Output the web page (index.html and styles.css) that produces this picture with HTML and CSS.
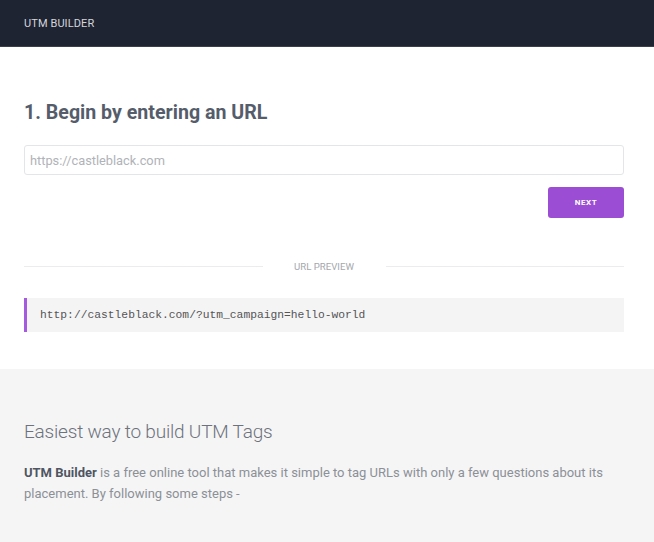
FILE: index.html
```html
<!DOCTYPE html>
<html>
<head>
<meta charset="utf-8">
<link rel="stylesheet" href="styles.css">
</head>
<body>
<header class="topbar"><span class="brand">UTM BUILDER</span></header>
<main class="builder">
  <h1 class="step-title">1. Begin by entering an URL</h1>
  <input class="url-input" type="text" placeholder="https://castleblack.com">
  <div class="actions"><button class="btn-next">NEXT</button></div>
  <div class="divider"><span class="divider-line"></span><span class="divider-label">URL PREVIEW</span><span class="divider-line"></span></div>
  <div class="preview">http://castleblack.com/?utm_campaign=hello-world</div>
</main>
<section class="info">
  <h2 class="info-title">Easiest way to build UTM Tags</h2>
  <p class="info-text"><strong>UTM Builder</strong> is a free online tool that makes it simple to tag URLs with only a few questions about its placement. By following some steps -</p>
</section>
</body>
</html>
```
FILE: styles.css
```css
* { box-sizing: border-box; }
html, body { margin: 0; padding: 0; }
body { font-family: Roboto, "Liberation Sans", sans-serif; background: #f5f5f6; width: 654px; height: 542px; overflow: hidden; }
.topbar { height: 47px; background: #1f2433; display: flex; align-items: center; padding: 0 24px; border-bottom: 1px solid #3a3f4d; }
.brand { color: #d4d6db; font-size: 11px; letter-spacing: 0.1px; }
.builder { background: #fff; padding: 54px 30px 37px 24px; }
.step-title { margin: 0; font-size: 19.6px; font-weight: 700; color: #555d6b; line-height: 23px; }
.url-input { display: block; width: 600px; height: 30px; margin-top: 21px; border: 1px solid #e4e5e8; border-radius: 3px; padding: 0 5px; font-family: Roboto, sans-serif; font-size: 12.8px; color: #444; outline: none; }
.url-input::placeholder { color: #b0b3b8; }
.actions { display: flex; justify-content: flex-end; width: 600px; margin-top: 12px; }
.btn-next { width: 76px; height: 31px; border: none; border-radius: 3px; background: #9b4dd3; color: #fff; font-family: Roboto, sans-serif; font-weight: 700; font-size: 8px; letter-spacing: 0.6px; }
.divider { display: flex; align-items: center; width: 600px; margin-top: 40px; height: 16px; }
.divider-line { flex: 1; height: 1px; background: #ececee; }
.divider-label { width: 123px; text-align: center; font-size: 9.6px; color: #a4a7ad; }
.preview { width: 600px; margin-top: 24px; height: 34px; background: #f4f4f5; border-left: 3px solid #a45be0; display: flex; align-items: center; padding-left: 13px; font-family: "Liberation Mono", monospace; font-size: 11.3px; color: #555; }
.info { padding: 50px 24px 0 24px; }
.info-title { margin: 0; font-size: 19px; font-weight: 300; color: #6d727c; line-height: 26px; letter-spacing: -0.2px; }
.info-text { margin: 17px 0 0 0; width: 600px; font-size: 13px; line-height: 21px; color: #8c9097; }
.info-text strong { color: #4f5562; font-weight: 700; }
```
